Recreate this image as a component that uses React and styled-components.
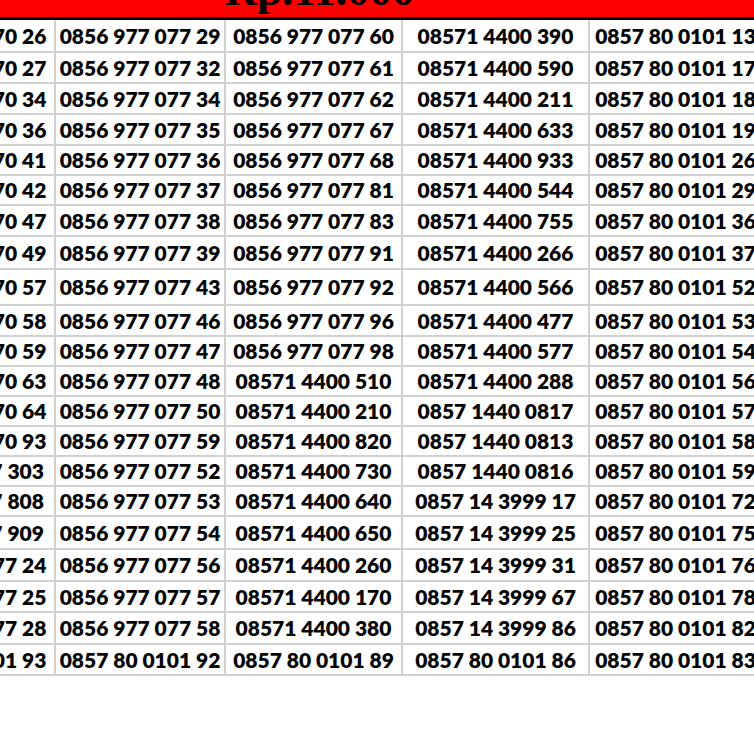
import React from 'react';
import styled, { createGlobalStyle } from 'styled-components';

const Global = createGlobalStyle`
  html, body {
    margin: 0;
    padding: 0;
    background: #fff;
    overflow: hidden;
  }
`;

const S = {
  viewport: styled.div`
    width: 754px;
    height: 754px;
    overflow: hidden;
    background: #fff;
  `,
  sheet: styled.table`
    margin-left: -124px;
    width: 885px;
    table-layout: fixed;
    border-collapse: collapse;
    font-family: 'Lato', 'Carlito', 'Liberation Sans', sans-serif;
    font-weight: 800;
    font-size: 21px;
    color: #050505;
  `,
  col: styled.col`
    width: ${(p) => p.w}px;
  `,
  headCell: styled.td`
    padding: 0;
    background: #ff0000;
    border-bottom: 3px solid #000;
  `,
  headBand: styled.div`
    height: 17px;
    padding-bottom: 0;
    box-sizing: border-box;
    overflow: hidden;
    display: flex;
    align-items: flex-end;
    justify-content: center;
  `,
  price: styled.span`
    font-family: 'Liberation Serif', 'Times New Roman', serif;
    font-weight: 700;
    font-size: 45px;
    line-height: 1;
    margin-bottom: 4px;
    color: #000;
  `,
  row: styled.tr`
    height: ${(p) => p.h}px;
  `,
  cell: styled.td`
    padding: 0;
    border: 2px solid #d0d0d0;
    text-align: center;
    vertical-align: middle;
    white-space: nowrap;
    overflow: hidden;
    line-height: 1;
  `,
};

const widths = [178, 170, 177, 187, 173];

const heights = [33, 31, 31, 31, 30, 30, 31, 33, 36, 31, 30, 30, 30, 30, 30, 30, 33, 32, 31, 32, 31];

const col1 = [
  '0856 977 070 26', '0856 977 070 27', '0856 977 070 34', '0856 977 070 36',
  '0856 977 070 41', '0856 977 070 42', '0856 977 070 47', '0856 977 070 49',
  '0856 977 070 57', '0856 977 070 58', '0856 977 070 59', '0856 977 070 63',
  '0856 977 070 64', '0856 977 070 93', '08571 4477 303', '08571 4477 808',
  '08571 4477 909', '0856 977 077 24', '0856 977 077 25', '0856 977 077 28',
  '0857 80 0101 93',
];

const col2 = [
  29, 32, 34, 35, 36, 37, 38, 39, 43, 46, 47, 48, 50, 59, 52, 53, 54, 56, 57, 58,
].map((n) => `0856 977 077 ${n}`).concat(['0857 80 0101 92']);

const col3 = [60, 61, 62, 67, 68, 81, 83, 91, 92, 96, 98]
  .map((n) => `0856 977 077 ${n}`)
  .concat([510, 210, 820, 730, 640, 650, 260, 170, 380].map((n) => `08571 4400 ${n}`))
  .concat(['0857 80 0101 89']);

const col4 = [390, 590, 211, 633, 933, 544, 755, 266, 566, 477, 577, 288]
  .map((n) => `08571 4400 ${n}`)
  .concat(['0857 1440 0817', '0857 1440 0813', '0857 1440 0816'])
  .concat([17, 25, 31, 67, 86].map((n) => `0857 14 3999 ${n}`))
  .concat(['0857 80 0101 86']);

const col5 = [13, 17, 18, 19, 26, 29, 36, 37, 52, 53, 54, 56, 57, 58, 59, 72, 75, 76, 78, 82, 83]
  .map((n) => `0857 80 0101 ${n}`);

const columns = [col1, col2, col3, col4, col5];

const App = () => {
  return (
    <S.viewport>
      <Global />
      <S.sheet>
        <colgroup>
          {widths.map((w, i) => (
            <S.col key={i} w={w} />
          ))}
        </colgroup>
        <tbody>
          <tr>
            <S.headCell colSpan={5}>
              <S.headBand>
                <S.price>Rp.11.000</S.price>
              </S.headBand>
            </S.headCell>
          </tr>
          {heights.map((h, r) => (
            <S.row key={r} h={h}>
              {columns.map((col, c) => (
                <S.cell key={c}>{col[r]}</S.cell>
              ))}
            </S.row>
          ))}
        </tbody>
      </S.sheet>
    </S.viewport>
  );
};

export default App;
